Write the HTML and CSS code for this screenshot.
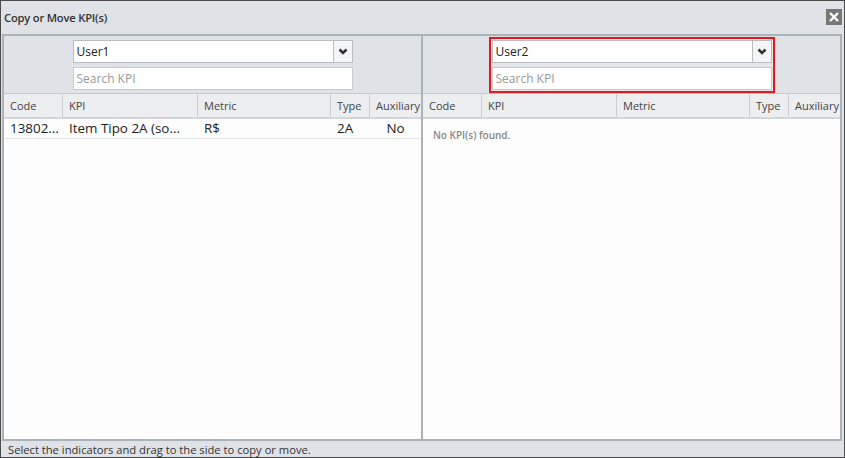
FILE: index.html
```html
<!DOCTYPE html>
<html lang="en">
<head>
  <meta charset="UTF-8" />
  <title>Copy or Move KPI(s)</title>
  <link rel="stylesheet" href="styles.css">
</head>
<body>
  <div class="dialog">
    <div class="titlebar">
      <span class="title">Copy or Move KPI(s)</span>
      <button class="close" aria-label="Close">
        <svg width="10" height="10" viewBox="0 0 10 10"><path d="M1 1 L9 9 M9 1 L1 9" stroke="#fff" stroke-width="2.4" /></svg>
      </button>
    </div>

    <div class="panes">
      <div class="pane">
        <div class="toolbar">
          <div class="picker">
            <div class="select">
              <span class="value">User1</span>
              <span class="arrow"><svg width="10" height="7" viewBox="0 0 10 7"><path d="M1.5 1.5 L5 5 L8.5 1.5" fill="none" stroke="#333" stroke-width="2.6" /></svg></span>
            </div>
            <input class="search" type="text" placeholder="Search KPI" />
          </div>
        </div>
        <div class="grid">
          <div class="row head">
            <div class="c code">Code</div>
            <div class="c kpi">KPI</div>
            <div class="c metric">Metric</div>
            <div class="c type">Type</div>
            <div class="c aux">Auxiliary</div>
          </div>
          <div class="row item">
            <div class="c code">13802...</div>
            <div class="c kpi">Item Tipo 2A (so...</div>
            <div class="c metric">R$</div>
            <div class="c type">2A</div>
            <div class="c aux center">No</div>
          </div>
        </div>
      </div>

      <div class="pane">
        <div class="toolbar">
          <div class="picker active">
            <div class="select">
              <span class="value">User2</span>
              <span class="arrow"><svg width="10" height="7" viewBox="0 0 10 7"><path d="M1.5 1.5 L5 5 L8.5 1.5" fill="none" stroke="#333" stroke-width="2.6" /></svg></span>
            </div>
            <input class="search" type="text" placeholder="Search KPI" />
          </div>
        </div>
        <div class="grid">
          <div class="row head">
            <div class="c code">Code</div>
            <div class="c kpi">KPI</div>
            <div class="c metric">Metric</div>
            <div class="c type">Type</div>
            <div class="c aux">Auxiliary</div>
          </div>
          <div class="empty">No KPI(s) found.</div>
        </div>
      </div>
    </div>

    <div class="footer">Select the indicators and drag to the side to copy or move.</div>
  </div>
</body>
</html>
```

FILE: styles.css
```css
html, body {
  margin: 0;
  padding: 0;
  background: #fff;
  font-family: "Open Sans", "Noto Sans", sans-serif;
  color: #333;
}

.dialog {
  width: 845px;
  height: 458px;
  box-sizing: border-box;
  border: 1px solid #4b4b4b;
  background: #dfe3e7;
  display: flex;
  flex-direction: column;
}

.titlebar {
  height: 33px;
  display: flex;
  align-items: center;
  justify-content: space-between;
  padding: 0 2px 0 3px;
}

.title {
  font-size: 11.2px;
  font-weight: 600;
  color: #333;
  letter-spacing: -0.2px;
}

.close {
  width: 16px;
  height: 16px;
  margin-top: -2px;
  padding: 0;
  border: none;
  background: #777;
  display: flex;
  align-items: center;
  justify-content: center;
}

.panes {
  flex: 1;
  display: flex;
  margin: 0 2px 0 1px;
  border: 2px solid #abb3ba;
  background: #abb3ba;
  gap: 2px;
  min-height: 0;
}

.pane {
  flex: 1;
  display: flex;
  flex-direction: column;
  background: #fdfdfd;
}

.toolbar {
  background: #dfe3e7;
  height: 56px;
  display: flex;
  justify-content: center;
  align-items: flex-start;
  padding-top: 1px;
  border-bottom: 1px solid #c3c9ce;
}

.picker {
  width: 280px;
  padding: 1px;
  border: 2px solid transparent;
  display: flex;
  flex-direction: column;
  gap: 4px;
}

.picker.active {
  border-color: #e8151b;
  background: #e4e7ea;
}

.select {
  height: 23px;
  box-sizing: border-box;
  border: 1px solid #b8bec4;
  background: #fff;
  display: flex;
  align-items: stretch;
}

.select .value {
  flex: 1;
  font-size: 12px;
  line-height: 21px;
  padding-left: 3px;
  color: #222;
}

.select .arrow {
  width: 18px;
  border-left: 1px solid #b8bec4;
  background: #f4f5f6;
  display: flex;
  align-items: center;
  justify-content: center;
}

.search {
  height: 23px;
  box-sizing: border-box;
  margin: 0;
  border: 1px solid #c6cbd0;
  background: #fff;
  font-family: inherit;
  font-size: 12px;
  padding: 0 3px;
  outline: none;
}

.search::placeholder {
  color: #999;
}

.grid {
  flex: 1;
  display: flex;
  flex-direction: column;
}

.row {
  display: flex;
}

.row.head {
  height: 23px;
  background: #eceef0;
  border-bottom: 2px solid #d3d7db;
}

.row.head .c {
  font-size: 11px;
  line-height: 23px;
  color: #444;
  border-right: 1px solid #c9ced3;
}

.row.head .c:last-child {
  border-right: none;
}

.c {
  box-sizing: border-box;
  padding-left: 6px;
  white-space: nowrap;
  overflow: hidden;
}

.code { width: 59px; }
.kpi { width: 135px; }
.metric { width: 133px; }
.type { width: 39px; }
.aux { flex: 1; }

.row.item {
  height: 19px;
  border-bottom: 1px solid #e3e6e9;
}

.row.item .c {
  font-size: 13.4px;
  line-height: 19px;
  color: #222;
}

.row.item .center {
  text-align: center;
  padding-left: 0;
}

.empty {
  padding: 9px 10px;
  font-size: 10px;
  font-weight: 600;
  color: #888;
}

.footer {
  height: 16px;
  font-size: 11.2px;
  line-height: 18px;
  padding-left: 7px;
  color: #333;
  overflow: hidden;
}
```
